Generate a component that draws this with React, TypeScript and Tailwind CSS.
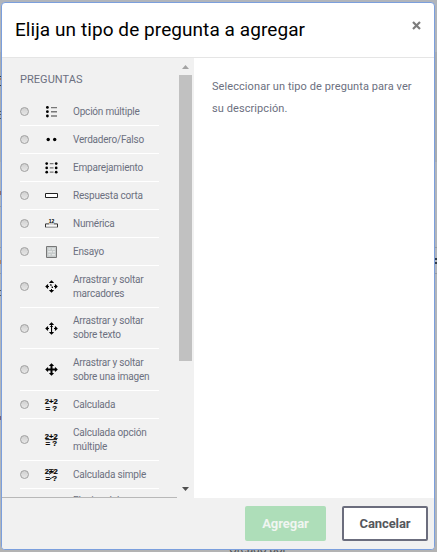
import React from "react";

type IconName =
  | "choice" | "truefalse" | "match" | "short" | "numeric" | "essay"
  | "marker" | "ddtext" | "ddimage" | "calc" | "calcmulti" | "calcsimple";

function Arrows({ kind }: { kind: IconName }) {
  return (
    <g fill="#000">
      <path d="M6.5 .2 8.8 2.6V3.1H4.2V2.6zM6.5 12.8 8.8 10.4V9.9H4.2V10.4zM.2 6.5 2.6 4.2H3.1V8.8H2.6zM12.8 6.5 10.4 4.2H9.9V8.8H10.4z" />
      {kind === "ddimage" && <path d="M5.5 3h2v7h-2zM3 5.5h7v2H3z" />}
      {kind === "ddtext" && <path d="M6 3h1.1v7H6zM5 4h3v.8H5zM3 6h1v1H3zM9 6h1v1H9z" />}
      {kind === "marker" && <path d="M5 4.3h1.4l.4 1.5H5.4zM6.4 6.4h1.4l.3 1.6H6.8zM3 6h1v1H3zM9 6h1v1H9zM6 9h1v1H6z" />}
    </g>
  );
}

function Calc({ kind }: { kind: IconName }) {
  return (
    <g className="font-['Liberation_Sans',sans-serif] text-[8px] font-bold" fill="#000">
      <text x="-0.2" y="5.8" textLength="13" lengthAdjust="spacingAndGlyphs" stroke="#000" strokeWidth=".2">2+2</text>
      <text x="0.4" y="13" xmlSpace="preserve" textLength="11.6" lengthAdjust="spacingAndGlyphs" stroke="#000" strokeWidth=".2">= ?</text>
      {kind === "calcmulti" && <path d="M.5 6.2H12V7.1H.5z" />}
      {kind === "calcsimple" && <path d="M4 1.5H8.6M4 4.7H8.6M5 10.8 8 9.2M4 6.5 9.5 2.5" stroke="#222" strokeWidth=".9" />}
    </g>
  );
}

function QuestionIcon({ kind }: { kind: IconName }) {
  return (
    <svg width="13" height="13" viewBox="0 0 13 13" className="block shrink-0 overflow-visible" aria-hidden="true">
      {kind === "choice" && (
        <>
          {[2.4, 6.7, 11].map((y) => <circle key={y} cx="2.4" cy={y} r="1.4" />)}
          <path d="M6 2h6v1.2H6zM6 6h6v1.4H6zM6 10.2h6v1.6H6z" fill="#777" />
        </>
      )}
      {kind === "truefalse" && (
        <g fill="#000"><circle cx="3.2" cy="6.5" r="1.7" /><circle cx="9.7" cy="6.5" r="1.7" /></g>
      )}
      {kind === "match" && (
        <>
          {[2.6, 6.9, 11.2].map((y) => (
            <g key={y}><circle cx="1.7" cy={y} r="1.35" /><circle cx="11.2" cy={y} r="1.35" /></g>
          ))}
          <path d="M4.8 2h3.7v1.2H4.8zM4.8 6.3h3.7v1.2H4.8zM4.8 10.6h3.7v1.2H4.8z" fill="#777" />
        </>
      )}
      {kind === "short" && <path d="M.5 4.5h12v4H.5z" fill="#fff" stroke="#222" />}
      {kind === "numeric" && (
        <>
          <path d="M1 7h11v3H1z" fill="#f8f8f8" />
          <path d="M0 9.5h13v1.5H0z" fill="#aaa" />
          <path d="M.5 10V6.9H4M9 6.9h3.5V10" fill="none" stroke="#333" />
          <path d="M4 6.9h5" stroke="#aaa" />
          <text x="3.8" y="5.9" className="font-['Liberation_Sans',sans-serif] text-[5px] font-bold" fill="#000">12</text>
        </>
      )}
      {kind === "essay" && (
        <>
          <path d="M1.5 1.5h10v11h-10z" fill="#c6cbcb" stroke="#777" />
          <path d="M3.5 4h2M7 4h3M3 6.8h4M8 6.8h2M3.5 9.8h2M7 9.8h3" stroke="#f1f1f1" />
        </>
      )}
      {(kind === "marker" || kind === "ddtext" || kind === "ddimage") && <Arrows kind={kind} />}
      {(kind === "calc" || kind === "calcmulti" || kind === "calcsimple") && <Calc kind={kind} />}
    </svg>
  );
}

const questions: { icon: IconName; lines: string[]; height: string }[] = [
  { icon: "choice", lines: ["Opción múltiple"], height: "h-7" },
  { icon: "truefalse", lines: ["Verdadero/Falso"], height: "h-7" },
  { icon: "match", lines: ["Emparejamiento"], height: "h-7" },
  { icon: "short", lines: ["Respuesta corta"], height: "h-7" },
  { icon: "numeric", lines: ["Numérica"], height: "h-7" },
  { icon: "essay", lines: ["Ensayo"], height: "h-7" },
  { icon: "marker", lines: ["Arrastrar y soltar", "marcadores"], height: "h-[42px]" },
  { icon: "ddtext", lines: ["Arrastrar y soltar", "sobre texto"], height: "h-[41px]" },
  { icon: "ddimage", lines: ["Arrastrar y soltar", "sobre una imagen"], height: "h-[42px]" },
  { icon: "calc", lines: ["Calculada"], height: "h-7" },
  { icon: "calcmulti", lines: ["Calculada opción", "múltiple"], height: "h-[42px]" },
  { icon: "calcsimple", lines: ["Calculada simple"], height: "h-7" },
  { icon: "match", lines: ["Elegir palabra", "faltante"], height: "h-[39px]" },
];

// Slices of page text that stay visible in the one-pixel strip left of the dialog.
const leftEdge = [
  "h-[76px]", "h-px bg-[#303c49]", "h-px", "h-0.5 bg-[#a8795a]", "h-[5px]", "h-px bg-[#303c49]",
  "h-[25px]", "h-px bg-[#4d5964]", "h-0.5", "h-px bg-[#4d5964]", "h-[3px]", "h-px bg-[#4d5964]",
  "h-[72px]", "h-1 bg-[#906b68]", "h-[11px]", "h-px bg-[#969ba2]", "h-[53px]", "h-1 bg-[#b5835c]",
  "h-[26px]", "h-px bg-[#4d5964]", "h-1", "h-px bg-[#4d5964]", "h-[120px]", "h-1 bg-[#75607a]",
];

function Backdrop() {
  return (
    <div className="col-start-1 row-start-1 grid bg-[#b3b3b3]">
      <div className="col-start-1 row-start-1 flex flex-col">
        <div className="h-[52px] shrink-0 bg-[#b1b5bb]" />
        <div className="h-[110px] shrink-0 bg-[#a8acb1]" />
        <div className="h-[86px] shrink-0 border-b border-[#969ba2] bg-[#b1b5bb]" />
        <div className="flex h-[26px] shrink-0 flex-col items-end gap-0.5 border-b border-[#969ba2] bg-[#b1b5bb] pt-[10px]">
          <span className="h-0.5 w-0.5 bg-[#303c49]" />
          <span className="h-0.5 w-0.5 bg-[#303c49]" />
        </div>
        <div className="h-[268px] shrink-0 bg-[#b1b5bb]" />
        <p className="h-[10px] shrink-0 pl-[229px] text-[12px] leading-[14px] tracking-[-0.15px] text-[#4b5158]">Creado por</p>
      </div>
      <div className="col-start-1 row-start-1 flex w-px flex-col">
        {leftEdge.map((slice, i) => <span key={i} className={`block shrink-0 ${slice}`} />)}
      </div>
    </div>
  );
}

export default function App() {
  return (
    <div className="grid h-[552px] w-[437px] grid-cols-[437px] grid-rows-[552px] overflow-hidden font-[Roboto,sans-serif] text-[#6c7080]">
      <Backdrop />
      <section role="dialog" className="z-10 col-start-1 row-start-1 ml-px mt-0.5 flex h-[548px] w-[434px] flex-col overflow-hidden rounded-[4px] border border-[#7b9fdd] bg-white">
        <header className="flex h-[55px] shrink-0 items-start justify-between border-b border-[#e5e5e5] pl-[13px] pr-3">
          <h1 className="mt-[15px] whitespace-nowrap text-[19px] leading-6 tracking-[0.07px] text-black">Elija un tipo de pregunta a agregar</h1>
          <button aria-label="Cerrar" className="mt-[16px] h-3 w-3">
            <svg width="9" height="9" viewBox="0 0 9 9" className="mx-auto"><path d="M1 1 8 8M8 1 1 8" stroke="#7d7d7d" strokeWidth="2.2" /></svg>
          </button>
        </header>
        <div className="flex h-[440px] shrink-0">
          <aside className="flex w-48 shrink-0 bg-[#f1f1f1]">
            <div className="h-full w-[175px] overflow-hidden border-b border-[#b8b8b8] px-[18px]">
              <h2 className="h-10 pt-[15px] text-[11px] leading-[14px] tracking-[0.05px]">PREGUNTAS</h2>
              <ul>
                {questions.map((q, i) => (
                  <li key={i} className={`flex w-[139px] items-center border-b border-white ${q.height}`}>
                    <span className="h-[9px] w-[9px] shrink-0 rounded-full border border-[#a0a0a0] bg-gradient-to-b from-[#d0d0d0] to-[#e7e7e7]" />
                    <span className="ml-4"><QuestionIcon kind={q.icon} /></span>
                    <span className="ml-[15px] whitespace-nowrap text-[10px] leading-[14px] tracking-[-0.2px]">
                      {q.lines.map((line) => <span className="block" key={line}>{line}</span>)}
                    </span>
                  </li>
                ))}
              </ul>
            </div>
            <div className="flex w-[17px] flex-col items-center bg-[#f1f1f1]">
              <svg width="17" height="17" className="shrink-0"><path d="M5 11h7L8.5 7z" fill="#a3a3a3" /></svg>
              <div className="h-[286px] w-[13px] bg-[#c1c1c1]" />
              <svg width="17" height="17" className="mt-auto shrink-0"><path d="M5 6h7L8.5 10z" fill="#505050" /></svg>
            </div>
          </aside>
          <p className="pl-[18px] pt-[18px] text-[11px] leading-[22px] tracking-[0.08px]">
            Seleccionar un tipo de pregunta para ver<br />su descripción.
          </p>
        </div>
        <footer className="flex flex-1 justify-end gap-4 bg-[#f1f1f1] pr-[6px] pt-2">
          <button className="h-[35px] w-[81px] rounded-[2px] bg-[#aedeb9] text-[13px] font-bold tracking-[-0.05px] text-[#f0f5f1]">Agregar</button>
          <button className="h-[35px] w-[86px] rounded-[2px] border-2 border-[#6b6d7d] bg-white text-[13px] font-bold tracking-[-0.1px] text-[#55575d]">Cancelar</button>
        </footer>
      </section>
    </div>
  );
}
